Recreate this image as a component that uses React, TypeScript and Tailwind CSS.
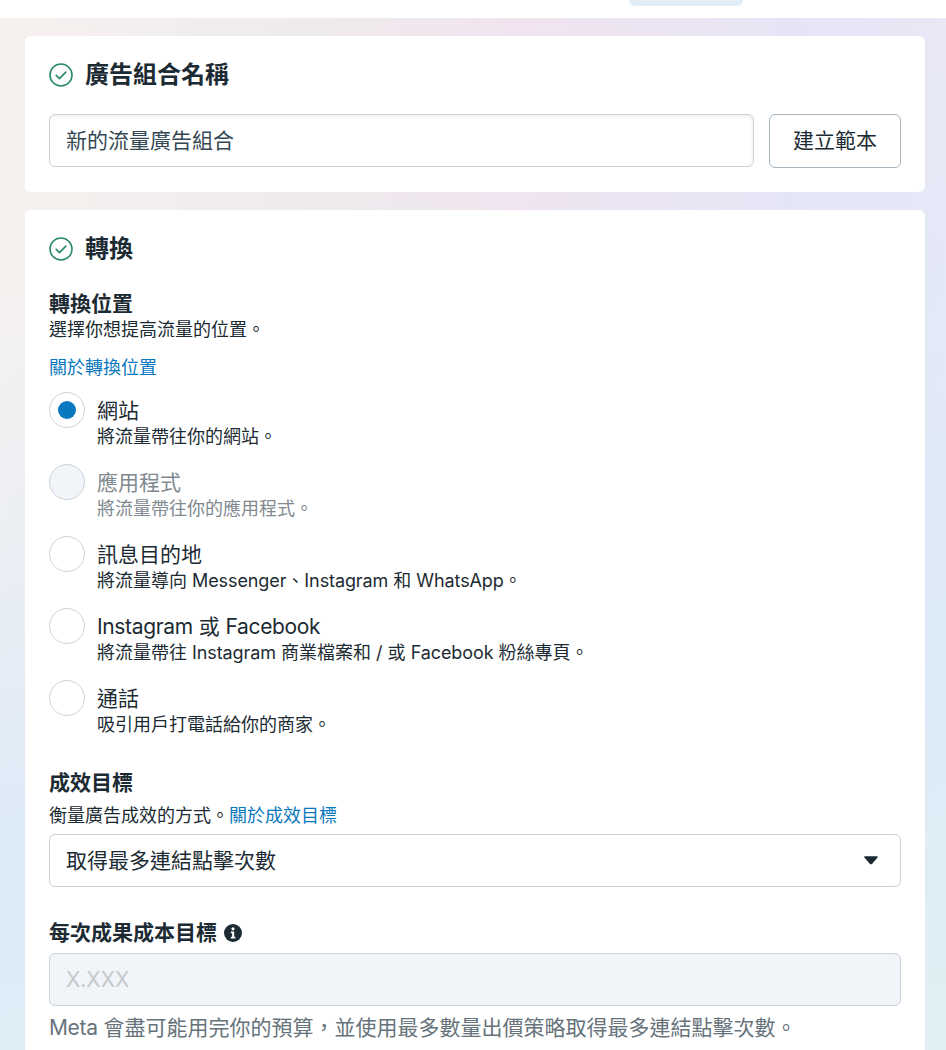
import type { ReactNode } from 'react'

const FONT = "font-['Inter','Noto_Sans_CJK_TC',sans-serif]"

// latin runs sit a bit tighter than Inter's defaults
function L({ children }: { children: ReactNode }) {
  return <span className="tracking-[-0.1px]">{children}</span>
}

const OPTIONS: { label: ReactNode; desc: ReactNode; checked?: boolean; disabled?: boolean }[] = [
  { label: '網站', desc: '將流量帶往你的網站。', checked: true },
  { label: '應用程式', desc: '將流量帶往你的應用程式。', disabled: true },
  {
    label: '訊息目的地',
    desc: <>將流量導向 <L>Messenger</L>、<L>Instagram</L> 和 <L>WhatsApp</L>。</>,
  },
  {
    label: <><span className="tracking-[-0.35px]">Instagram</span> 或 <span className="tracking-[-0.35px]">Facebook</span></>,
    desc: <>將流量帶往 <L>Instagram</L> 商業檔案和 / 或 <L>Facebook</L> 粉絲專頁。</>,
  },
  { label: '通話', desc: '吸引用戶打電話給你的商家。' },
]

function SectionTitle({ title }: { title: string }) {
  return (
    <div className="flex items-center gap-3 h-[30px]">
      <svg width="24" height="24" viewBox="0 0 24 24" fill="none" stroke="#2b8a6a">
        <circle cx="12" cy="12" r="11" strokeWidth="1.6" />
        <path d="M7.2 12.4l3.3 3.2 6.3-6.4" strokeWidth="1.7" strokeLinecap="round" strokeLinejoin="round" />
      </svg>
      <h2 className="text-[24px] leading-[30px] font-bold text-[#1c2b33]">{title}</h2>
    </div>
  )
}

function Radio({ checked, disabled }: { checked?: boolean; disabled?: boolean }) {
  return (
    <span
      className={[
        'w-9 h-9 shrink-0 rounded-full border flex items-center justify-center border-[#cbd2d9]',
        disabled ? 'bg-[#f1f4f8]' : 'bg-white',
      ].join(' ')}
    >
      {checked && <span className="w-[18px] h-[18px] rounded-full bg-[#0a78be]" />}
    </span>
  )
}

export default function App() {
  return (
    <div className={`${FONT} w-[946px] h-[1050px] overflow-hidden bg-white text-[#1c2b33]`}>
      {/* top tab bar */}
      <div className="h-[18px] bg-white flex">
        <div className="ml-[629px] w-[114px] h-[6px] rounded-b-[6px] bg-[#e0edf6]" />
      </div>

      <div className="h-[1032px] pr-[21px] pt-[18px] pl-[25px] bg-[linear-gradient(168deg,rgba(222,235,248,0)_20%,rgba(222,235,248,0.45)_42%,rgba(220,234,248,1)_68%,rgba(224,240,243,1)_100%),linear-gradient(90deg,#f7f2f0_0%,#efebec_32%,#f1e4f0_55%,#e6e4f5_85%,#e8e8f6_100%)]">
        <section className="bg-white rounded-[6px] h-[156px] px-6 pt-6">
          <SectionTitle title="廣告組合名稱" />
          <div className="flex gap-[15px] mt-6">
            <div className="w-[705px] h-[53px] rounded-[6px] border border-[#cbd2d9] shadow-[inset_0_3px_3px_-1px_rgba(203,210,217,0.3),inset_-3px_0_3px_-2px_rgba(203,210,217,0.2)] px-4 flex items-center text-[21px] text-[#344854]">
              新的流量廣告組合
            </div>
            <button
              type="button"
              className="w-[132px] h-[54px] rounded-[6px] border border-[#a5b3bd] bg-white text-[21px] text-[#1c2b33]"
            >
              建立範本
            </button>
          </div>
        </section>

        <section className="bg-white rounded-t-[6px] mt-[18px] h-[860px] px-6 pt-6">
          <SectionTitle title="轉換" />

          <h3 className="mt-[27px] text-[21px] leading-[26px] font-bold">轉換位置</h3>
          <p className="mt-px text-[18px] leading-[24px] text-[#1c2b33]">選擇你想提高流量的位置。</p>
          <a className="block mt-[14px] text-[18px] leading-[24px] text-[#0a78be]">關於轉換位置</a>

          <div className="mt-[12px] flex flex-col gap-[9px]">
            {OPTIONS.map(({ label, desc, checked, disabled }, i) => (
              <div key={i} className="flex gap-3 h-[63px]">
                <Radio checked={checked} disabled={disabled} />
                <div className={disabled ? 'text-[#80898f]' : 'text-[#1c2b33]'}>
                  <p className="text-[21px] leading-[26px] mt-[6px]">{label}</p>
                  <p className="text-[18px] leading-[26px]">{desc}</p>
                </div>
              </div>
            ))}
          </div>

          <h3 className="mt-[27px] text-[21px] leading-[26px] font-bold">成效目標</h3>
          <p className="mt-[8px] text-[18px] leading-[24px]">
            衡量廣告成效的方式。<a className="text-[#0a78be]">關於成效目標</a>
          </p>
          <div className="mt-[6px] h-[53px] rounded-[6px] border border-[#cbd2d9] pl-4 pr-[22px] flex items-center justify-between text-[21px]">
            <span>取得最多連結點擊次數</span>
            <svg width="14" height="9" viewBox="0 0 14 9">
              <path d="M1 .2h12c.7 0 1 .7.6 1.2L8 7.9c-.6.6-1.4.6-2 0L.4 1.4C0 .9.3.2 1 .2z" fill="#1c2b33" />
            </svg>
          </div>

          <div className="mt-[32px] flex items-center gap-[7px] h-[28px]">
            <h3 className="text-[21px] leading-[26px] font-bold">每次成果成本目標</h3>
            <svg width="18" height="18" viewBox="0 0 18 18">
              <circle cx="9" cy="9" r="9" fill="#1c2b33" />
              <circle cx="9" cy="4.8" r="1.6" fill="#fff" />
              <path d="M6.8 7.6h3.4v5.2h1.2v1.6H6.8v-1.6h1.3V9.2H6.8z" fill="#fff" />
            </svg>
          </div>
          <div className="mt-[6px] h-[53px] rounded-[6px] border border-[#cbd2d9] bg-[#f1f4f8] px-4 flex items-center text-[21px] text-[#c5c9cc]">
            X.XXX
          </div>
          <p className="mt-[8px] text-[21px] leading-[28px] text-[#67737b]">
            <span className="tracking-[-0.35px]">Meta</span> 會盡可能用完你的預算，並使用最多數量出價策略取得最多連結點擊次數。
          </p>
        </section>
      </div>
    </div>
  )
}
